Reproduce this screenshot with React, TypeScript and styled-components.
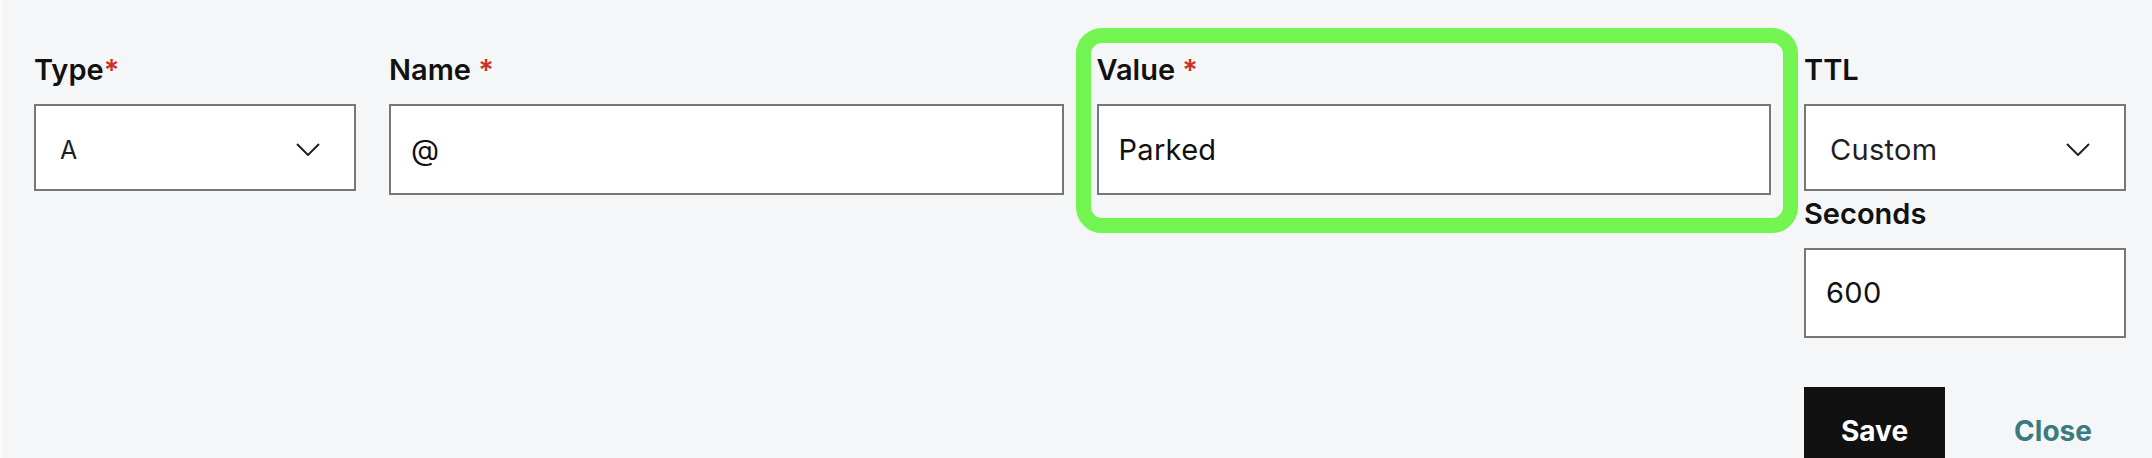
import React from 'react';
import styled, { createGlobalStyle } from 'styled-components';

const GlobalStyles = createGlobalStyle`
  html, body {
    margin: 0;
    padding: 0;
    background: #f5f6f8;
  }
  body {
    font-family: Inter, "Noto Sans", "Liberation Sans", sans-serif;
    color: #111;
  }
`;

const Page = styled.div`
  min-height: 100vh;
  box-sizing: border-box;
  background: #f5f6f8;
  border-left: 2px solid #fcfcfd;
  padding: 53px 26px 0 32px;
`;

const RecordRow = styled.form`
  display: grid;
  grid-template-columns: 322px 1fr 1fr 322px;
  column-gap: 33px;
  align-items: start;
`;

const Field = styled.div<{ $highlight?: boolean }>`
  position: relative;
  display: flex;
  flex-direction: column;

  ${({ $highlight }) =>
    $highlight &&
    `
    &::after {
      content: '';
      position: absolute;
      top: -25px;
      left: -21px;
      right: -27px;
      bottom: -38px;
      border: 15px solid #73f551;
      border-radius: 26px;
      pointer-events: none;
    }
  `}
`;

const SubField = styled(Field)`
  margin-top: 6px;
`;

const Label = styled.label`
  display: block;
  font-size: 29px;
  font-weight: 600;
  line-height: 1.2;
  color: #111;
  margin-bottom: 16px;
`;

const Required = styled.span<{ $spaced?: boolean }>`
  color: #d02f1f;
  margin-left: ${({ $spaced }) => ($spaced ? '0.25em' : '0')};
`;

const TextInput = styled.input<{ $height?: number }>`
  width: 100%;
  height: ${({ $height }) => $height ?? 91}px;
  box-sizing: border-box;
  border: 2px solid #777;
  border-radius: 0;
  background: #fff;
  padding: 0 20px;
  font-family: inherit;
  font-size: 29px;
  font-weight: 400;
  letter-spacing: 0.3px;
  color: #111;
  outline: none;
`;

const SelectBox = styled.button<{ $fontSize?: number }>`
  width: 100%;
  height: 87px;
  box-sizing: border-box;
  display: flex;
  align-items: center;
  justify-content: space-between;
  border: 2px solid #777;
  border-radius: 0;
  background: #fff;
  padding: 5px 34px 0 24px;
  font-family: inherit;
  font-size: ${({ $fontSize }) => $fontSize ?? 29}px;
  letter-spacing: 0.3px;
  color: #1f1f1f;
  text-align: left;
  cursor: pointer;
`;

const Actions = styled.div`
  display: flex;
  gap: 32px;
  margin-top: 49px;
`;

const Button = styled.button<{ $primary?: boolean }>`
  height: 88px;
  padding: 0 37px;
  border: none;
  border-radius: 0;
  font-family: inherit;
  font-size: 28px;
  font-weight: 700;
  background: ${({ $primary }) => ($primary ? '#111' : 'transparent')};
  color: ${({ $primary }) => ($primary ? '#fff' : '#3a7b80')};
  cursor: pointer;
`;

const Chevron = () => (
  <svg width="24" height="13" viewBox="0 0 24 13" fill="none">
    <polyline points="1,1 12,12 23,1" stroke="#222" strokeWidth="2" />
  </svg>
);

const App: React.FC = () => {
  return (
    <>
      <GlobalStyles />
      <Page>
        <RecordRow onSubmit={(e) => e.preventDefault()}>
          <Field>
            <Label>
              Type<Required>*</Required>
            </Label>
            <SelectBox type="button" $fontSize={25}>
              <span>A</span>
              <Chevron />
            </SelectBox>
          </Field>

          <Field>
            <Label htmlFor="name">
              Name<Required $spaced>*</Required>
            </Label>
            <TextInput id="name" defaultValue="@" />
          </Field>

          <Field $highlight>
            <Label htmlFor="value">
              Value<Required $spaced>*</Required>
            </Label>
            <TextInput id="value" defaultValue="Parked" />
          </Field>

          <Field>
            <Label>TTL</Label>
            <SelectBox type="button">
              <span>Custom</span>
              <Chevron />
            </SelectBox>
            <SubField>
              <Label htmlFor="seconds">Seconds</Label>
              <TextInput id="seconds" defaultValue="600" $height={90} />
            </SubField>
            <Actions>
              <Button type="submit" $primary>
                Save
              </Button>
              <Button type="button">Close</Button>
            </Actions>
          </Field>
        </RecordRow>
      </Page>
    </>
  );
};

export default App;
